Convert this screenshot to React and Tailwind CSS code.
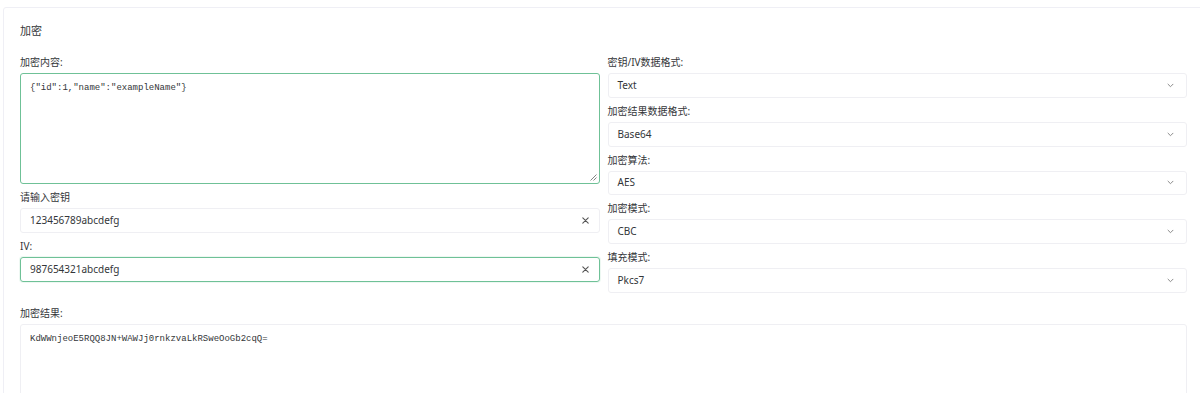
import React from "react";

const sans = { fontFamily: '"Noto Sans", "Noto Sans CJK SC", sans-serif' };

function Label({ children }) {
  return (
    <div className="h-[24px] pt-[6px] text-[10px] leading-[14px] text-[#333639]">{children}</div>
  );
}

function ClearIcon() {
  return (
    <svg width="7" height="7" viewBox="0 0 7 7" className="shrink-0 mr-[1px]">
      <path d="M0.8 0.8L6.2 6.2M6.2 0.8L0.8 6.2" stroke="#555" strokeWidth="1.1" strokeLinecap="round" />
    </svg>
  );
}

function Chevron() {
  return (
    <svg width="7" height="5" viewBox="0 0 7 5" className="shrink-0">
      <path d="M1 1.2L3.5 3.7L6 1.2" stroke="#8a8a8a" strokeWidth="1" fill="none" strokeLinecap="round" strokeLinejoin="round" />
    </svg>
  );
}

function Input({ value, focus }) {
  return (
    <div
      className={
        "h-[25px] flex items-center justify-between pl-[9px] pr-[9px] rounded-[3px] border text-[10px] text-[#333639] " +
        (focus ? "border-[#6fc197] shadow-[0_0_0_1px_rgba(24,160,88,0.08)]" : "border-[#efeff3]")
      }
    >
      <span>{value}</span>
      <ClearIcon />
    </div>
  );
}

function Select({ value }) {
  return (
    <div className="h-[24.75px] flex items-center justify-between pl-[9px] pr-[12px] rounded-[3px] border border-[#efeff3] text-[10px] text-[#333639]">
      <span>{value}</span>
      <Chevron />
    </div>
  );
}

function Area({ value, focus, height, grip }) {
  return (
    <div
      className={
        "relative rounded-[3px] border pl-[9px] pt-[6px] text-[9px] leading-[14px] text-[#333639] " +
        (focus ? "border-[#6fc197]" : "border-[#efeff3]")
      }
      style={{ height }}
    >
      <span style={{ fontFamily: '"Liberation Mono", "DejaVu Sans Mono", monospace' }}>{value}</span>
      {grip && (
        <svg width="7" height="7" viewBox="0 0 7 7" className="absolute right-[2px] bottom-[2px]">
          <path d="M6.5 0.5L0.5 6.5M6.5 3.5L3.5 6.5" stroke="#777" strokeWidth="0.9" />
        </svg>
      )}
    </div>
  );
}

export default function App() {
  return (
    <div className="w-[1200px] h-[393px] overflow-hidden bg-white" style={sans}>
      <div className="mt-[7px] ml-[3px] w-[1212px] border border-[#efeff5] rounded-[3px] pl-[16px]">
        <div className="w-[1167px]">
          <div className="pt-[16px] text-[11px] leading-[14px] text-[#333639]">加密</div>
          <div className="mt-[11px] grid grid-cols-2 gap-x-[8px]">
            <div className="flex flex-col">
              <Label>加密内容:</Label>
              <Area value={'{"id":1,"name":"exampleName"}'} focus height={111} grip />
              <Label>请输入密钥</Label>
              <Input value="123456789abcdefg" />
              <Label>IV:</Label>
              <Input value="987654321abcdefg" focus />
            </div>
            <div className="flex flex-col">
              <Label>密钥/IV数据格式:</Label>
              <Select value="Text" />
              <Label>加密结果数据格式:</Label>
              <Select value="Base64" />
              <Label>加密算法:</Label>
              <Select value="AES" />
              <Label>加密模式:</Label>
              <Select value="CBC" />
              <Label>填充模式:</Label>
              <Select value="Pkcs7" />
            </div>
          </div>
          <div className="mt-[7px]">
            <Label>加密结果:</Label>
            <Area value="KdWWnjeoE5RQQ8JN+WAWJj0rnkzvaLkRSweOoGb2cqQ=" height={111} />
          </div>
        </div>
      </div>
    </div>
  );
}
